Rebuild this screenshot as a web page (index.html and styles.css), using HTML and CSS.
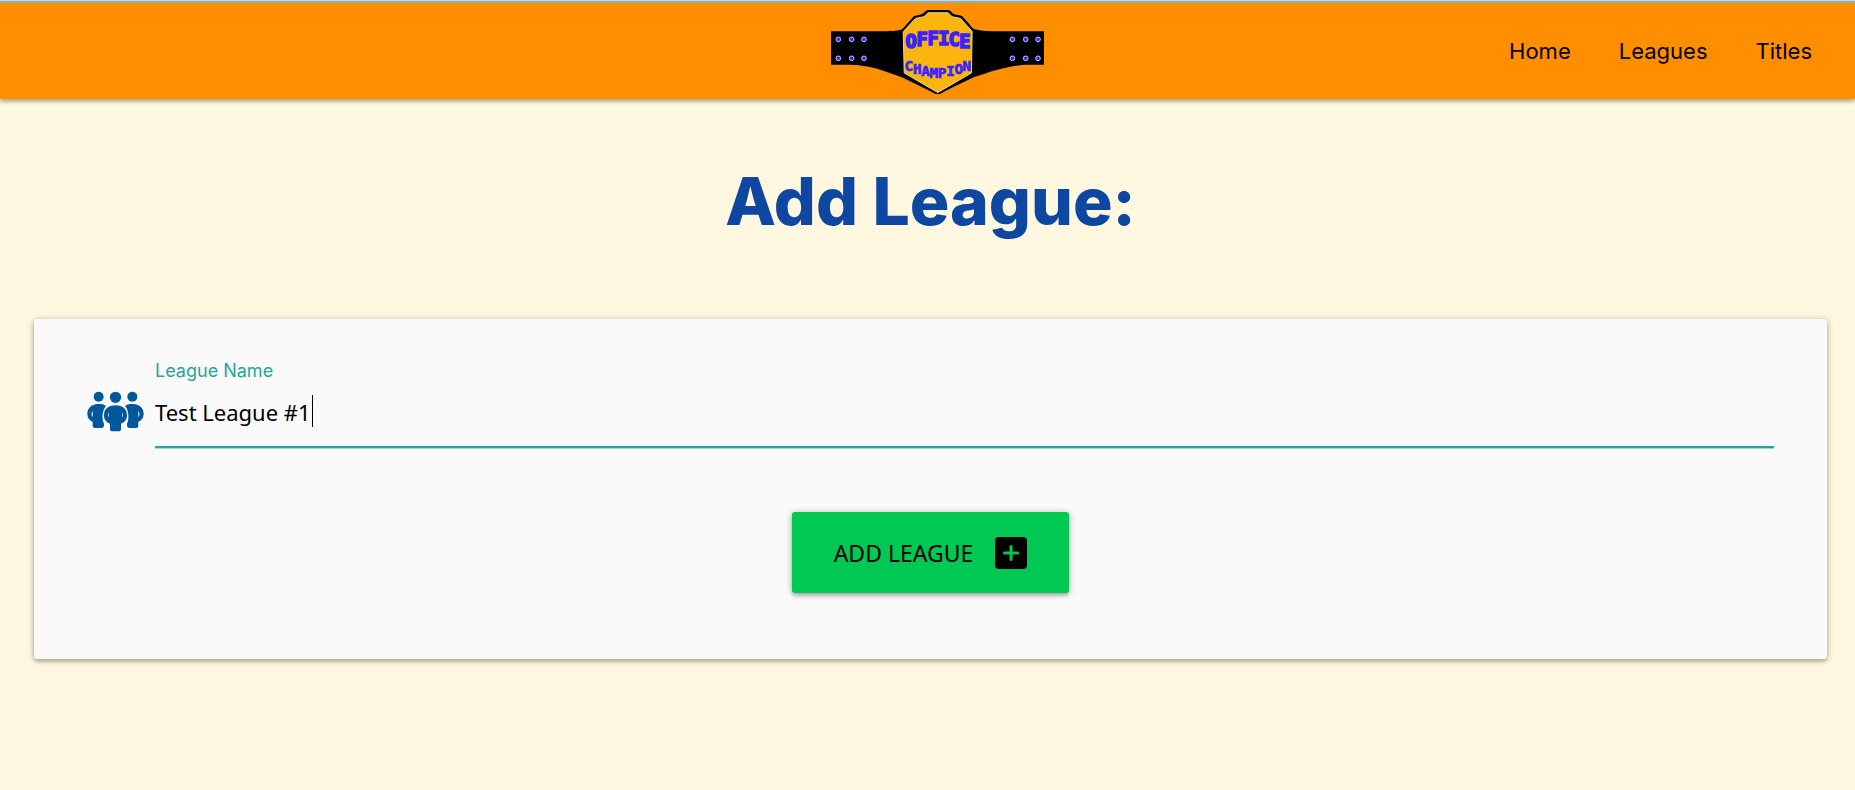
FILE: index.html
```html
<!DOCTYPE html>
<html lang="en">
<head>
<meta charset="utf-8">
<meta name="viewport" content="width=device-width, initial-scale=1">
<title>Office Champion - Add League</title>
<link rel="stylesheet" href="styles.css">
</head>
<body>
<header class="navbar">
  <a class="brand" href="#" aria-label="Office Champion">
    <svg class="brand-logo" viewBox="34 33 640 252" role="img" aria-label="Office Champion">
      <path d="M34 97H170C215 97 236 96 250 90L282 52L308 45L323 33H389L402 45L428 51L460 88C474 96 500 97 540 97H674V197H625C575 198 515 216 463 235L358 285H350L250 236C190 214 150 198 90 197H34Z" fill="#000"/>
      <path d="M251 98L288 58L313 53L326 41H386L398 53L423 58L458 97L456 222L355 281L254 222Z" fill="#fcb50f" stroke="#000" stroke-width="14" stroke-linejoin="round"/>
      <path d="M251 98L288 58L313 53L326 41H386L398 53L423 58L458 97L456 222L355 281L254 222Z" fill="#fcb50f" stroke="#e3d6a0" stroke-width="3"/>
      <g fill="#3b22ff" stroke="#c9c4e8" stroke-width="3">
        <circle cx="56" cy="121" r="7"/><circle cx="96" cy="121" r="7"/><circle cx="133" cy="121" r="7"/>
        <circle cx="56" cy="178" r="7"/><circle cx="96" cy="178" r="7"/><circle cx="133" cy="178" r="7"/>
        <circle cx="579" cy="121" r="7"/><circle cx="619" cy="121" r="7"/><circle cx="656" cy="121" r="7"/>
        <circle cx="579" cy="178" r="7"/><circle cx="619" cy="178" r="7"/><circle cx="656" cy="178" r="7"/>
      </g>
      <g class="logo-office">
        <text x="275" y="148">O</text>
        <text x="308" y="141">F</text>
        <text x="341" y="137">F</text>
        <text x="373" y="137">I</text>
        <text x="404" y="141">C</text>
        <text x="436" y="148">E</text>
      </g>
      <g class="logo-champion">
        <text x="268" y="216">C</text>
        <text x="293" y="224">H</text>
        <text x="318" y="231">A</text>
        <text x="343" y="237">M</text>
        <text x="368" y="237">P</text>
        <text x="393" y="231">I</text>
        <text x="418" y="224">O</text>
        <text x="442" y="216">N</text>
      </g>
    </svg>
  </a>
  <nav class="nav-links">
    <a href="#">Home</a>
    <a href="#">Leagues</a>
    <a href="#">Titles</a>
  </nav>
</header>
<main class="page">
  <h1 class="page-title">Add League:</h1>
  <form class="card">
    <div class="field">
      <svg class="field-icon" viewBox="20 32 171 123" aria-hidden="true">
        <g fill="#01579b">
          <circle cx="55" cy="49" r="15"/><circle cx="156" cy="49" r="15"/><circle cx="105.500" cy="51" r="17"/>
          <path fill-rule="evenodd" d="M71 73C65 71 59 71 52 71C33 72 21 84 21 101C21 113 27 120 37 125V136Q37 143 44 143H63Q70 143 71 136V130C64 118 65 90 77 77ZM37 92Q30 101 37 111Z"/>
          <path fill-rule="evenodd" d="M140 73C146 71 152 71 159 71C178 72 190 84 190 101C190 113 184 120 174 125V136Q174 143 167 143H148Q141 143 140 136V130C147 118 146 90 134 77ZM174 92Q181 101 174 111Z"/>
          <path fill-rule="evenodd" d="M105.500 75C84 75 71 87 71 104C71 118 78 126 89 130V145Q89 153 97 153H114Q122 153 122 145V130C133 126 140 118 140 104C140 87 127 75 105.500 75ZM86 96Q81 104 86 112ZM125 96Q130 104 125 112Z"/>
        </g>
      </svg>
      <div class="field-body">
        <label class="field-label" for="league-name">League Name</label>
        <input class="field-input" id="league-name" type="text" value="Test League #1" autocomplete="off" spellcheck="false">
        <span class="caret"></span>
      </div>
    </div>
    <button class="submit" type="button">
      <span>Add League</span>
      <svg class="submit-icon" viewBox="0 0 32 32" aria-hidden="true">
        <rect width="32" height="32" rx="4" fill="#000"/>
        <path d="M16 9.500V22.500M9.500 16H22.500" stroke="#00c853" stroke-width="3" stroke-linecap="round"/>
      </svg>
    </button>
  </form>
</main>
</body>
</html>
```
FILE: styles.css
```css
* {
  box-sizing: border-box;
}

body {
  min-height: 100vh;
  margin: 0;
  background: #fff7e0;
  color: #000;
  font-family: Inter, "Liberation Sans", sans-serif;
}

.navbar {
  display: grid;
  grid-template-columns: 1fr auto 1fr;
  align-items: center;
  height: 99px;
  padding: 4px 19px 0;
  border-top: 1px solid #bcd9e0;
  background: #ff8f00;
  box-shadow: inset 0 2px 0 #90adb5, 0 3px 3px rgba(0, 0, 0, 0.14), 0 1px 6px rgba(0, 0, 0, 0.3);
}

.brand {
  grid-column: 2;
  display: flex;
  padding-left: 20px;
}

.brand-logo {
  width: 213px;
  height: 84px;
}

.brand-logo text {
  font-family: "DejaVu Sans Mono", monospace;
  font-weight: 700;
  text-anchor: middle;
  fill: #3b22ff;
  stroke: #3b22ff;
}

.logo-office text {
  font-size: 56px;
  stroke-width: 5px;
}

.logo-champion text {
  font-size: 43px;
  stroke-width: 2px;
}

.nav-links {
  display: flex;
  justify-content: flex-end;
  padding-bottom: 2px;
}

.nav-links a {
  padding: 0 24px;
  color: #000;
  font-size: 22px;
  line-height: 32px;
  text-decoration: none;
}

.page {
  padding: 0 28px 32px 34px;
}

.page-title {
  margin: 0;
  padding: 65px 0 81px;
  color: #0d47a1;
  font-size: 66px;
  font-weight: 800;
  line-height: 74px;
  text-align: center;
}

.card {
  display: flex;
  flex-direction: column;
  align-items: center;
  gap: 64px;
  padding: 40px 53px 66px;
  border-radius: 3px;
  background: #fafafa;
  box-shadow: 0 3px 3px rgba(0, 0, 0, 0.14), 0 1px 7px rgba(0, 0, 0, 0.3);
}

.field {
  display: flex;
  align-items: flex-start;
  gap: 11px;
  width: 100%;
}

.field-icon {
  flex: none;
  width: 57px;
  height: 41px;
  margin-top: 32px;
}

.field-body {
  position: relative;
  display: flex;
  flex: 1;
  flex-direction: column;
}

.field-label {
  color: #26a69a;
  font-size: 18px;
  line-height: 24px;
}

.field-input {
  width: 100%;
  height: 65px;
  padding: 0 0 6px;
  border: 0;
  border-bottom: 2px solid #26a69a;
  outline: 0;
  background: transparent;
  box-shadow: 0 1px 0 #a2d8d3;
  color: #000;
  font-family: "Noto Sans", "Open Sans", sans-serif;
  font-size: 22px;
}

.caret {
  position: absolute;
  top: 36px;
  left: 157px;
  width: 1px;
  height: 32px;
  background: #000;
}

.submit {
  display: flex;
  align-items: center;
  gap: 22px;
  height: 81px;
  padding: 0 42px;
  border: 0;
  border-radius: 3px;
  background: #00c853;
  box-shadow: 0 3px 3px rgba(0, 0, 0, 0.14), 0 1px 7px rgba(0, 0, 0, 0.3);
  color: #000;
  font-family: "Noto Sans", "Open Sans", sans-serif;
  font-size: 23px;
  text-transform: uppercase;
}

.submit-icon {
  width: 32px;
  height: 32px;
}
```
